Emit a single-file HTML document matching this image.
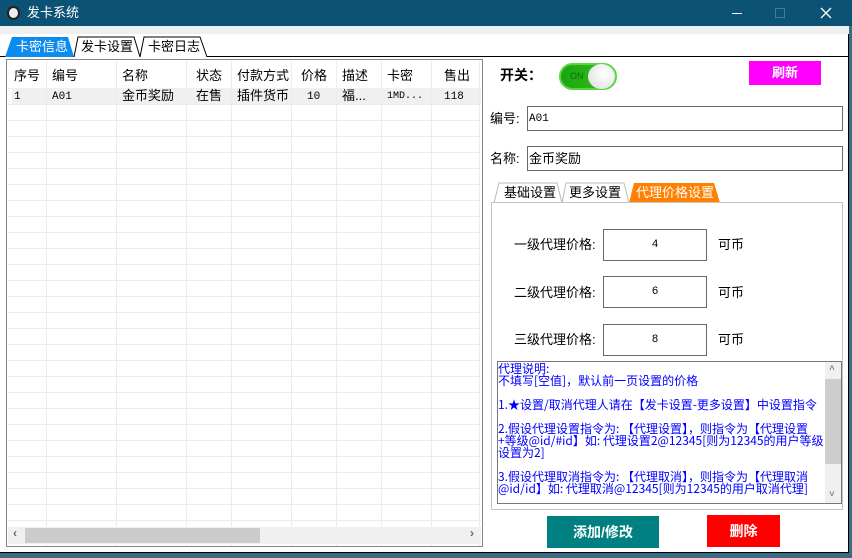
<!DOCTYPE html>
<html><head><meta charset="utf-8"><style>
*{margin:0;padding:0;box-sizing:border-box}
body{width:852px;height:558px;position:relative;overflow:hidden;background:#fff;font-family:"Liberation Sans","Noto Sans CJK SC",sans-serif;font-size:12px;color:#000;line-height:1.1}
.a{position:absolute}
.t{white-space:nowrap}
.inp{position:absolute;border:1px solid #6a6a6a;background:#fff}
.cell{position:absolute;top:0;height:100%;border-left:1px solid #ececec}
</style></head><body>
<div class="a" style="left:0;top:0;width:852px;height:558px;background:#3a6c86"></div>
<div class="a" style="left:0;top:0;width:849px;height:553px;background:#fff;border-right:1px solid #000;border-bottom:1px solid #000"></div>
<div class="a" style="left:0;top:0;width:852px;height:26px;background:#0b5274"></div>
<div class="a" style="left:7px;top:6px;width:13px;height:14px;border-radius:50%;background:#eee;border:2px solid #222"></div>
<div class="a t" style="left:27px;top:6px;color:#fff;font-size:13px">发卡系统</div>
<div class="a" style="left:732px;top:13px;width:10px;height:1px;background:#fff"></div>
<div class="a" style="left:775px;top:8px;width:10px;height:10px;border:1px solid #3f7a99"></div>
<svg class="a" style="left:820px;top:7px" width="12" height="12"><path d="M1 1L11 11M11 1L1 11" stroke="#fff" stroke-width="1.3"/></svg>
<div class="a" style="left:0;top:26px;width:849px;height:8px;background:#efefef"></div>
<svg class="a" style="left:0;top:34px" width="849" height="24">
<path d="M0 22.5H849" stroke="#000"/>
<path d="M5 23L12 3H68L74 23Z" fill="#0d8cf0"/>
<path d="M74 23L78 3H134L140 23" fill="#fff" stroke="#000"/>
<path d="M140 23L144 3H200L207 23" fill="#fff" stroke="#000"/>
</svg>
<div class="a t" style="left:16px;top:40px;color:#fff;font-size:13px">卡密信息</div>
<div class="a t" style="left:81px;top:40px;font-size:13px">发卡设置</div>
<div class="a t" style="left:148px;top:40px;font-size:13px">卡密日志</div>
<div class="a" style="left:6px;top:59px;width:477px;height:488px;border:1px solid #888;overflow:hidden">
 <div class="a" style="left:1px;top:0;width:473px;height:464px;background:repeating-linear-gradient(#fff 0 15px,#ececec 15px 16px);background-position:0 13px"></div>
 <div class="a" style="left:1px;top:0;width:473px;height:28px;background:#fff"></div>
 <div class="a" style="left:5px;top:28px;width:469px;height:16px;background:#f0f0f0"></div>
 <div class="cell" style="left:39px"></div><div class="cell" style="left:109px"></div><div class="cell" style="left:179px"></div><div class="cell" style="left:224px"></div><div class="cell" style="left:284px"></div><div class="cell" style="left:329px"></div><div class="cell" style="left:374px"></div><div class="cell" style="left:424px"></div><div class="cell" style="left:472px"></div>
 <div class="a t" style="left:7px;top:9px;font-size:13px">序号</div>
 <div class="a t" style="left:45px;top:9px;font-size:13px">编号</div>
 <div class="a t" style="left:115px;top:9px;font-size:13px">名称</div>
 <div class="a t" style="left:189px;top:9px;font-size:13px">状态</div>
 <div class="a t" style="left:230px;top:9px;font-size:13px">付款方式</div>
 <div class="a t" style="left:294px;top:9px;font-size:13px">价格</div>
 <div class="a t" style="left:335px;top:9px;font-size:13px">描述</div>
 <div class="a t" style="left:380px;top:9px;font-size:13px">卡密</div>
 <div class="a t" style="left:437px;top:9px;font-size:13px">售出</div>
 <div class="a t" style="left:7px;top:31px;font-family:'Liberation Mono';font-size:11px">1</div>
 <div class="a t" style="left:45px;top:31px;font-family:'Liberation Mono';font-size:11px">A01</div>
 <div class="a t" style="left:115px;top:29px;font-size:13px">金币奖励</div>
 <div class="a t" style="left:189px;top:29px;font-size:13px">在售</div>
 <div class="a t" style="left:230px;top:29px;font-size:13px">插件货币</div>
 <div class="a t" style="left:300px;top:31px;font-family:'Liberation Mono';font-size:11px">10</div>
 <div class="a t" style="left:335px;top:29px;font-size:13px">福...</div>
 <div class="a t" style="left:380px;top:31px;font-family:'Liberation Mono';font-size:10px">1MD...</div>
 <div class="a t" style="left:437px;top:31px;font-family:'Liberation Mono';font-size:11px">118</div>
 <div class="a" style="left:1px;top:467px;width:473px;height:17px;background:#f0f0f0"></div>
 <div class="a" style="left:18px;top:468px;width:235px;height:15px;background:#cbcbcb"></div>
 <div class="a t" style="left:6px;top:467px;color:#666;font-weight:bold">‹</div>
 <div class="a t" style="left:463px;top:467px;color:#666;font-weight:bold">›</div>
</div>
<div class="a t" style="left:500px;top:68px;font-size:14px;font-weight:bold">开关：</div>
<div class="a" style="left:559px;top:63px;width:58px;height:27px;border-radius:14px;background:linear-gradient(90deg,#1aa50e,#35c41f);border:2px solid #5ad443"></div>
<div class="a t" style="left:570px;top:72px;font-size:9px;color:#0d6a08">ON</div>
<div class="a" style="left:588px;top:64px;width:27px;height:25px;border-radius:50%;background:radial-gradient(circle at 60% 40%,#fff,#ddd)"></div>
<div class="a" style="left:749px;top:61px;width:72px;height:24px;background:#ff00ff;color:#fff;font-weight:bold;font-size:13px;text-align:center;line-height:24px">刷新</div>
<div class="a t" style="left:490px;top:112px;font-size:13px">编号:</div>
<div class="inp" style="left:527px;top:106px;width:316px;height:25px"><span class="a" style="left:1px;top:6px;font-family:'Liberation Mono';font-size:11px">A01</span></div>
<div class="a t" style="left:490px;top:152px;font-size:13px">名称:</div>
<div class="inp" style="left:527px;top:146px;width:316px;height:25px"><span class="a t" style="left:1px;top:5px;font-size:13px">金币奖励</span></div>
<svg class="a" style="left:490px;top:181px" width="240" height="23">
<path d="M4 22L9 2H67L72 22" fill="#fff" stroke="#bbb"/>
<path d="M72 22L76 2H134L139 22" fill="#fff" stroke="#bbb"/>
<path d="M139 22L144 2H224L230 22Z" fill="#ff8000"/>
</svg>
<div class="a t" style="left:504px;top:186px;font-size:13px">基础设置</div>
<div class="a t" style="left:569px;top:186px;font-size:13px">更多设置</div>
<div class="a t" style="left:636px;top:186px;font-size:13px;color:#fff">代理价格设置</div>
<div class="a" style="left:491px;top:202px;width:352px;height:308px;border:1px solid #c4c4c4"></div>
<div class="a t" style="left:514px;top:238px;font-size:13px">一级代理价格:</div>
<div class="a t" style="left:514px;top:286px;font-size:13px">二级代理价格:</div>
<div class="a t" style="left:514px;top:333px;font-size:13px">三级代理价格:</div>
<div class="inp" style="left:603px;top:229px;width:104px;height:32px;text-align:center;line-height:30px;font-family:'Liberation Mono';font-size:11px">4</div>
<div class="inp" style="left:603px;top:276px;width:104px;height:32px;text-align:center;line-height:30px;font-family:'Liberation Mono';font-size:11px">6</div>
<div class="inp" style="left:603px;top:324px;width:104px;height:32px;text-align:center;line-height:30px;font-family:'Liberation Mono';font-size:11px">8</div>
<div class="a t" style="left:718px;top:238px;font-size:13px">可币</div>
<div class="a t" style="left:718px;top:286px;font-size:13px">可币</div>
<div class="a t" style="left:718px;top:333px;font-size:13px">可币</div>
<div class="a" style="left:497px;top:361px;width:345px;height:143px;border:1px solid #777;overflow:hidden">
 <div class="a t" style="left:0px;top:1px;width:327px;overflow:hidden;color:#0000ff;font-size:12px;line-height:12px;font-family:'Noto Sans CJK SC',monospace">代理说明:<br>不填写[空值]，默认前一页设置的价格<br><br>1.★设置/取消代理人请在【发卡设置-更多设置】中设置指令<br><br>2.假设代理设置指令为: 【代理设置】，则指令为【代理设置<br>+等级@id/#id】如: 代理设置2@12345[则为12345的用户等级<br>设置为2]<br><br>3.假设代理取消指令为: 【代理取消】，则指令为【代理取消<br>@id/id】如: 代理取消@12345[则为12345的用户取消代理]</div>
 <div class="a" style="left:327px;top:0;width:16px;height:141px;background:#f0f0f0"></div>
 <div class="a" style="left:327px;top:17px;width:16px;height:85px;background:#cdcdcd"></div>
 <div class="a t" style="left:331px;top:1px;color:#666;font-size:10px">˄</div>
 <div class="a t" style="left:331px;top:127px;color:#666;font-size:10px">˅</div>
</div>
<div class="a" style="left:547px;top:516px;width:112px;height:32px;background:#008080;color:#fff;font-weight:bold;font-size:14px;text-align:center;line-height:32px">添加/修改</div>
<div class="a" style="left:707px;top:515px;width:73px;height:32px;background:#ff0000;color:#fff;font-weight:bold;font-size:14px;text-align:center;line-height:32px">删除</div>
</body></html>
